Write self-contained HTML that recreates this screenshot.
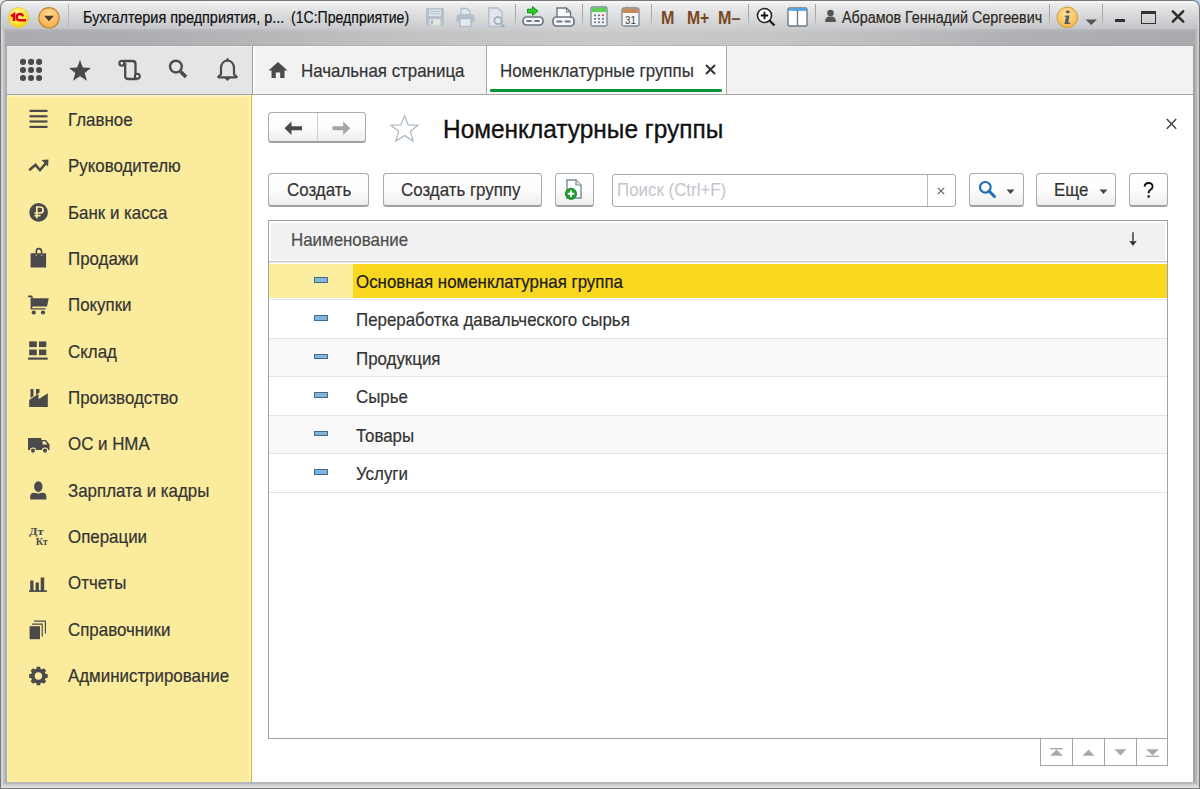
<!DOCTYPE html>
<html><head><meta charset="utf-8"><style>
html,body{margin:0;padding:0;width:1200px;height:789px;overflow:hidden;background:#7a7a7a;}
.r{position:absolute;display:block;}
.t{position:absolute;white-space:nowrap;}
svg.r{overflow:visible;}
</style></head><body>
<div class="r" style="left:0px;top:0px;width:1200px;height:789px;background:#7a7a7a;"></div>
<div class="r" style="left:0px;top:0px;width:8px;height:8px;background:#dfe6ee;"></div>
<div class="r" style="left:1192px;top:0px;width:8px;height:8px;background:#bcd6f2;"></div>
<div class="r" style="left:0px;top:0px;width:1200px;height:789px;background:#787878;border-radius:7px 7px 0 0;"></div>
<div class="r" style="left:1px;top:1px;width:1198px;height:787px;background:#d9dadc;border-radius:6px 6px 0 0;"></div>
<div class="r" style="left:2px;top:1px;width:1196px;height:28px;background:linear-gradient(#fafafa 0px,#ebebec 3px,#d7d8da 14px,#c3c4c7 28px);border-radius:6px 6px 0 0;"></div>
<div class="r" style="left:2px;top:1px;width:1196px;height:28px;background:linear-gradient(to right,rgba(255,255,255,0) 0px,rgba(255,255,255,0.18) 600px,rgba(255,255,255,0) 1196px);border-radius:6px 6px 0 0;"></div>
<div class="r" style="left:2px;top:29px;width:1196px;height:17px;background:linear-gradient(rgba(255,255,255,0.12),rgba(255,255,255,0) 4px),linear-gradient(to right,#a9abae 0px,#abadb0 120px,#b6b7b9 260px,#c3c3c4 420px,#c9c9c9 600px,#c6c6c7 760px,#bbbcbe 900px,#afb0b3 1020px,#a8aaae 1200px);"></div>
<div class="r" style="left:5px;top:45px;width:1190px;height:1px;background:linear-gradient(to right,#9fa1a5,#b8b8b8 50%,#9fa1a5);"></div>
<div class="r" style="left:1px;top:29px;width:2px;height:759px;background:#d3d4d6;"></div>
<div class="r" style="left:3px;top:29px;width:2px;height:759px;background:#c0c0c1;"></div>
<div class="r" style="left:5px;top:46px;width:2px;height:742px;background:#a9adb8;"></div>
<div class="r" style="left:1196.5px;top:29px;width:2px;height:759px;background:#cbcbcb;"></div>
<div class="r" style="left:1194.5px;top:29px;width:2px;height:759px;background:#b5b5b5;"></div>
<div class="r" style="left:1193px;top:46px;width:1.5px;height:742px;background:#a2a2a4;"></div>
<div class="r" style="left:5px;top:782px;width:1190px;height:2px;background:#b6b8bd;"></div>
<div class="r" style="left:3px;top:784px;width:1194px;height:2px;background:#cecece;"></div>
<div class="r" style="left:1px;top:786px;width:1198px;height:2px;background:#dedede;"></div>
<svg class="r" style="left:8px;top:7px;" width="21" height="21" viewBox="0 0 21 21"><defs><radialGradient id="g1" cx="0.45" cy="0.35" r="0.7"><stop offset="0" stop-color="#fff9a8"/><stop offset="0.6" stop-color="#ffe93a"/><stop offset="1" stop-color="#f4c400"/></radialGradient></defs>
<circle cx="10.5" cy="10.5" r="10" fill="url(#g1)" stroke="#e8c23a" stroke-width="0.8"/>
<path d="M3 9.2 L6 7.4 L6 14" stroke="#e60012" stroke-width="2.6" fill="none"/>
<path d="M15 9.4 A3.2 3.2 0 1 0 11.6 13.3 L18 13.3" stroke="#e60012" stroke-width="2.4" fill="none"/></svg>
<svg class="r" style="left:38px;top:7px;" width="22" height="22" viewBox="0 0 22 22"><defs><radialGradient id="g2" cx="0.5" cy="0.35" r="0.7"><stop offset="0" stop-color="#ffd99a"/><stop offset="1" stop-color="#f6a940"/></radialGradient></defs>
<circle cx="11" cy="10.8" r="10.2" fill="url(#g2)" stroke="#bf8a2a" stroke-width="1.1"/>
<path d="M6 8.8 L16 8.8 L11 14.3 Z" fill="#4a3a22"/></svg>
<div class="r" style="left:68px;top:4px;width:1px;height:24px;background:#b8b9bb;"></div>
<div class="t" style="left:82.50px;top:7.56px;font-size:16px;line-height:20px;color:#101010;font-weight:normal;font-family:'Liberation Sans',sans-serif;transform:scaleX(0.9);transform-origin:0 0;-webkit-text-stroke:0.2px #101010;">Бухгалтерия предприятия, р...</div>
<div class="t" style="left:291.30px;top:7.56px;font-size:16px;line-height:20px;color:#101010;font-weight:normal;font-family:'Liberation Sans',sans-serif;transform:scaleX(0.88);transform-origin:0 0;-webkit-text-stroke:0.2px #101010;">(1С:Предприятие)</div>
<svg class="r" style="left:425px;top:7px;" width="20" height="20" viewBox="0 0 20 20"><rect x="1" y="1" width="18" height="18" rx="1" fill="#b4c0cc" />
<rect x="4" y="2.5" width="12" height="6.5" fill="#dde3ea"/><rect x="5" y="4" width="10" height="1" fill="#b4c0cc"/><rect x="5" y="6.2" width="10" height="1" fill="#b4c0cc"/>
<rect x="4.5" y="12" width="11" height="6.5" fill="#dfe6dc"/><rect x="6" y="13" width="2" height="4.5" fill="#a8b4c0"/></svg>
<svg class="r" style="left:455px;top:7px;" width="21" height="21" viewBox="0 0 21 21"><path d="M6 1.5 H12 L15 4.5 V8 H6 Z" fill="#e4e8ec" stroke="#b0bcc8" stroke-width="1.3"/>
<rect x="1.5" y="7.5" width="18" height="8" rx="2" fill="#b4c0cc"/><rect x="5" y="11.5" width="11" height="8" fill="#e6eaee" stroke="#b0bcc8" stroke-width="1.3"/></svg>
<svg class="r" style="left:487px;top:7px;" width="21" height="21" viewBox="0 0 21 21"><path d="M1.8 1 H11 L15 5 V19.5 H1.8 Z" fill="#e2e6ea" stroke="#b0bcc8" stroke-width="1.3"/>
<circle cx="11" cy="13.5" r="3.6" fill="#e4e8ec" stroke="#a9b2ba" stroke-width="2"/><path d="M13.5 16 L17.5 20" stroke="#a9b2ba" stroke-width="2.2"/></svg>
<div class="r" style="left:515px;top:4px;width:1.2px;height:22px;background:linear-gradient(#a0a1a3,#a8a9ab 60%,rgba(180,181,183,0.3));"></div>
<svg class="r" style="left:522px;top:6px;" width="22" height="20" viewBox="0 0 22 20"><path d="M5.5 3.2 H10.5 V0.6 L16 5 L10.5 9.4 V6.8 H5.5 Z" fill="#22d022" stroke="#138a13" stroke-width="0.9" stroke-linejoin="round"/>
<rect x="1" y="11" width="20" height="8" rx="3.5" fill="#f6f7f8" stroke="#6a7684" stroke-width="1.7"/>
<path d="M4.5 15 H9.6 M12.4 15 H17.5" stroke="#6a7684" stroke-width="1.8"/><path d="M9.6 15 H12.4" stroke="#c8ced4" stroke-width="1.2"/></svg>
<svg class="r" style="left:552px;top:7px;" width="23" height="21" viewBox="0 0 23 21"><path d="M5 1 H14.5 L18.5 5 V11 H5 Z" fill="#fafbfc" stroke="#6a7684" stroke-width="1.4"/><path d="M14.5 1 V5 H18.5" fill="none" stroke="#6a7684" stroke-width="1.1"/>
<rect x="1" y="10" width="21" height="9" rx="3.5" fill="#f6f7f8" stroke="#6a7684" stroke-width="1.7"/>
<path d="M4.5 14.5 H10 M13 14.5 H18.5" stroke="#6a7684" stroke-width="1.8"/><path d="M10 14.5 H13" stroke="#c8ced4" stroke-width="1.2"/></svg>
<div class="r" style="left:582px;top:4px;width:1.2px;height:22px;background:linear-gradient(#a0a1a3,#a8a9ab 60%,rgba(180,181,183,0.3));"></div>
<svg class="r" style="left:590px;top:6px;" width="18" height="21" viewBox="0 0 18 21"><rect x="1" y="1" width="16" height="19" rx="1.5" fill="#eef2f6" stroke="#7c8893" stroke-width="1.3"/>
<rect x="1.6" y="1.6" width="14.8" height="4.5" fill="#5fcf55"/>
<g fill="#6a7580"><rect x="4" y="8.5" width="2" height="1.6"/><rect x="8" y="8.5" width="2" height="1.6"/><rect x="4" y="12" width="2" height="1.6"/><rect x="8" y="12" width="2" height="1.6"/><rect x="12" y="12" width="2" height="1.6"/><rect x="4" y="15.5" width="2" height="1.6"/><rect x="8" y="15.5" width="2" height="1.6"/><rect x="12" y="15.5" width="2" height="1.6"/></g><rect x="12" y="8.5" width="2" height="1.6" fill="#e33"/></svg>
<svg class="r" style="left:621px;top:6px;" width="19" height="21" viewBox="0 0 19 21"><rect x="1" y="2" width="17" height="18" rx="2" fill="#f4f6f8" stroke="#7c8893" stroke-width="1.3"/>
<path d="M1.6 3 Q1.6 2.6 3 2.6 H16 Q17.4 2.6 17.4 4 V7 H1.6 Z" fill="#c98a55"/>
<rect x="5" y="0.5" width="1.5" height="3" fill="#9a9a9a"/><rect x="12.5" y="0.5" width="1.5" height="3" fill="#9a9a9a"/>
<text x="9.5" y="18" font-family="Liberation Sans" font-size="11.5" text-anchor="middle" fill="#444" textLength="11" lengthAdjust="spacingAndGlyphs">31</text></svg>
<div class="r" style="left:651px;top:4px;width:1.2px;height:22px;background:linear-gradient(#a0a1a3,#a8a9ab 60%,rgba(180,181,183,0.3));"></div>
<div class="t" style="left:660.50px;top:6.84px;font-size:17.5px;line-height:22px;color:#7a4820;font-weight:bold;font-family:'Liberation Sans',sans-serif;transform:scaleX(0.92);transform-origin:0 0;">M</div>
<div class="t" style="left:687.00px;top:6.84px;font-size:17.5px;line-height:22px;color:#7a4820;font-weight:bold;font-family:'Liberation Sans',sans-serif;transform:scaleX(0.9);transform-origin:0 0;">M+</div>
<div class="t" style="left:717.50px;top:6.84px;font-size:17.5px;line-height:22px;color:#7a4820;font-weight:bold;font-family:'Liberation Sans',sans-serif;transform:scaleX(0.92);transform-origin:0 0;">M&#8211;</div>
<div class="r" style="left:748px;top:4px;width:1.2px;height:22px;background:linear-gradient(#a0a1a3,#a8a9ab 60%,rgba(180,181,183,0.3));"></div>
<svg class="r" style="left:756px;top:7px;" width="21" height="20" viewBox="0 0 21 20"><circle cx="8.5" cy="8.5" r="7" fill="#fff" stroke="#222" stroke-width="1.6"/>
<path d="M8.5 4.8 V12.2 M4.8 8.5 H12.2" stroke="#111" stroke-width="1.8"/><path d="M13.5 13.5 L18.5 18.5" stroke="#222" stroke-width="2.4"/></svg>
<svg class="r" style="left:787px;top:7px;" width="21" height="20" viewBox="0 0 21 20"><rect x="1" y="1" width="19" height="18" rx="1.5" fill="#fff" stroke="#6d7a88" stroke-width="1.4"/>
<rect x="1.6" y="1.6" width="17.8" height="2.2" fill="#47a5ee"/><rect x="9.8" y="3" width="1.4" height="16" fill="#6d7a88"/></svg>
<div class="r" style="left:815px;top:4px;width:1.2px;height:22px;background:linear-gradient(#a0a1a3,#a8a9ab 60%,rgba(180,181,183,0.3));"></div>
<svg class="r" style="left:824px;top:9px;" width="13" height="14" viewBox="0 0 13 14"><circle cx="6.5" cy="4" r="3.3" fill="#555"/><path d="M1 13 Q1 8 5 7.5 H8 Q12 8 12 13 Z" fill="#555"/></svg>
<div class="t" style="left:842.00px;top:7.56px;font-size:16px;line-height:20px;color:#2e2a22;font-weight:normal;font-family:'Liberation Sans',sans-serif;transform:scaleX(0.895);transform-origin:0 0;-webkit-text-stroke:0.2px #2e2a22;">Абрамов Геннадий Сергеевич</div>
<div class="r" style="left:1049px;top:4px;width:1.2px;height:22px;background:linear-gradient(#a0a1a3,#a8a9ab 60%,rgba(180,181,183,0.3));"></div>
<svg class="r" style="left:1056px;top:6px;" width="23" height="23" viewBox="0 0 23 23"><defs><radialGradient id="g3" cx="0.45" cy="0.35" r="0.75"><stop offset="0" stop-color="#ffe2a0"/><stop offset="1" stop-color="#f4b23e"/></radialGradient></defs>
<circle cx="11.3" cy="11.3" r="10.3" fill="url(#g3)" stroke="#d09a30" stroke-width="1"/>
<ellipse cx="11.8" cy="6" rx="2" ry="1.4" fill="#5a5e64"/><path d="M8.8 9.4 H13.6 L12.2 16.4 H14.2 V18 H8.4 L10 11 H8.8 Z" fill="#5a5e64"/></svg>
<svg class="r" style="left:1085px;top:19px;" width="13" height="7" viewBox="0 0 13 7"><path d="M0.5 0.5 H12 L6.25 6 Z" fill="#555"/></svg>
<div class="r" style="left:1102px;top:4px;width:1.2px;height:22px;background:linear-gradient(#a0a1a3,#a8a9ab 60%,rgba(180,181,183,0.3));"></div>
<div class="r" style="left:1115px;top:19.3px;width:10px;height:3.2px;background:#333;"></div>
<div class="r" style="left:1141px;top:11px;width:15px;height:13px;border:1.6px solid #333;border-top-width:3px;box-sizing:border-box;"></div>
<svg class="r" style="left:1171px;top:10px;" width="14" height="13" viewBox="0 0 14 13"><path d="M1.8 1.3 L12.2 11.7 M12.2 1.3 L1.8 11.7" stroke="#2e2e2e" stroke-width="2.5" stroke-linecap="round"/></svg>
<div class="r" style="left:7px;top:46px;width:245px;height:48px;background:#e5e5e5;"></div>
<div class="r" style="left:7px;top:46px;width:245px;height:1px;background:#eeeeee;"></div>
<div class="r" style="left:7px;top:94px;width:245px;height:1px;background:#a3a5b0;"></div>
<div class="r" style="left:252px;top:46px;width:1px;height:49px;background:#a0a0a0;"></div>
<div class="r" style="left:253px;top:46px;width:940px;height:48px;background:#f2f2f2;"></div>
<div class="r" style="left:253px;top:46px;width:940px;height:1px;background:#f7f7f7;"></div>
<div class="r" style="left:253px;top:46px;width:2px;height:48px;background:#fbfbfb;"></div>
<div class="r" style="left:253px;top:94px;width:940px;height:1px;background:#a6a6a6;"></div>
<svg class="r" style="left:19px;top:57.5px;" width="25" height="25" viewBox="0 0 25 25"><circle cx="4.00" cy="3.90" r="3.05" fill="#4a4a4a"/><circle cx="12.05" cy="3.90" r="3.05" fill="#4a4a4a"/><circle cx="20.10" cy="3.90" r="3.05" fill="#4a4a4a"/><circle cx="4.00" cy="11.95" r="3.05" fill="#4a4a4a"/><circle cx="12.05" cy="11.95" r="3.05" fill="#4a4a4a"/><circle cx="20.10" cy="11.95" r="3.05" fill="#4a4a4a"/><circle cx="4.00" cy="20.00" r="3.05" fill="#4a4a4a"/><circle cx="12.05" cy="20.00" r="3.05" fill="#4a4a4a"/><circle cx="20.10" cy="20.00" r="3.05" fill="#4a4a4a"/></svg>
<svg class="r" style="left:68px;top:59px;" width="24" height="23" viewBox="0 0 24 23"><path d="M12 1 L14.9 8.6 L23 8.9 L16.7 13.9 L18.9 21.8 L12 17.3 L5.1 21.8 L7.3 13.9 L1 8.9 L9.1 8.6 Z" fill="#4a4a4a"/></svg>
<svg class="r" style="left:110px;top:52px;" width="32" height="32" viewBox="0 0 32 32"><path d="M13.5 9 H22.5 Q25.5 9 25.5 12 V24" fill="none" stroke="#4a4a4a" stroke-width="2.3"/><path d="M15.2 11 V24 Q15.2 27 18.2 27 H27" fill="none" stroke="#4a4a4a" stroke-width="2.3"/>
<circle cx="11.8" cy="11.2" r="2.4" fill="#fff" stroke="#4a4a4a" stroke-width="2.2"/><circle cx="27.3" cy="24.2" r="2.4" fill="#fff" stroke="#4a4a4a" stroke-width="2.2"/></svg>
<svg class="r" style="left:160px;top:52px;" width="32" height="32" viewBox="0 0 32 32"><circle cx="15.9" cy="14.6" r="5.9" fill="none" stroke="#4a4a4a" stroke-width="2.4"/><path d="M20.5 19.5 L26 25" stroke="#4a4a4a" stroke-width="3.8"/></svg>
<svg class="r" style="left:210px;top:52px;" width="32" height="32" viewBox="0 0 32 32"><path d="M17.5 8.5 Q11.5 9 11 16 V22.5 L8.8 24.2 Q7.8 25.2 9 25.4 H26 Q27.2 25.2 26.2 24.2 L24 22.5 V16 Q23.5 9 17.5 8.5 Z" fill="none" stroke="#4a4a4a" stroke-width="2.2" stroke-linejoin="round"/><path d="M15.5 7.8 L17.5 5.8 L19.5 7.8 Z M14.5 26 L17.5 29 L20.5 26 Z" fill="#4a4a4a"/></svg>
<svg class="r" style="left:268px;top:61px;" width="20" height="18" viewBox="0 0 20 18"><path d="M10 1 L19.5 9.5 H16.5 V17 H12.2 V11.5 H7.8 V17 H3.5 V9.5 H0.5 Z" fill="#4a4a4a"/></svg>
<div class="t" style="left:301.00px;top:59.53px;font-size:17.8px;line-height:22px;color:#333;font-weight:normal;font-family:'Liberation Sans',sans-serif;transform:scaleX(0.95);transform-origin:0 0;-webkit-text-stroke:0.2px #333;">Начальная страница</div>
<div class="r" style="left:486px;top:46px;width:1px;height:48px;background:#a8a8a8;"></div>
<div class="r" style="left:487px;top:46px;width:239px;height:48px;background:#fff;"></div>
<div class="r" style="left:726px;top:46px;width:1px;height:48px;background:#a8a8a8;"></div>
<div class="r" style="left:490px;top:89px;width:232px;height:2.5px;background:#0c9433;border-radius:1px;"></div>
<div class="t" style="left:500.00px;top:59.53px;font-size:17.8px;line-height:22px;color:#333;font-weight:normal;font-family:'Liberation Sans',sans-serif;transform:scaleX(0.95);transform-origin:0 0;-webkit-text-stroke:0.2px #333;">Номенклатурные группы</div>
<svg class="r" style="left:705px;top:64px;" width="11" height="11" viewBox="0 0 11 11"><path d="M1 1 L10 10 M10 1 L1 10" stroke="#333" stroke-width="2"/></svg>
<div class="r" style="left:7px;top:95px;width:244px;height:687px;background:#fbeb9d;"></div>
<div class="r" style="left:7px;top:95px;width:244px;height:1.5px;background:#fdf3b8;"></div>
<div class="r" style="left:7px;top:95px;width:1.3px;height:687px;background:#fdf1a6;"></div>
<div class="r" style="left:249px;top:95px;width:1.5px;height:687px;background:#fdf1ab;"></div>
<div class="r" style="left:250.5px;top:95px;width:1.5px;height:687px;background:#cfb940;"></div>
<div class="r" style="left:252px;top:95px;width:941px;height:687px;background:#fff;"></div>
<svg class="r" style="left:28px;top:109.2px;" width="22" height="21" viewBox="0 0 22 21"><g fill="#4a4a4a"><rect x="1.5" y="0.8" width="18" height="2.2"/><rect x="1.5" y="6.2" width="18" height="2.2"/><rect x="1.5" y="11.4" width="18" height="2.2"/><rect x="1.5" y="16.8" width="18" height="2.2"/></g></svg>
<div class="t" style="left:68.00px;top:108.83px;font-size:17.8px;line-height:22px;color:#333;font-weight:normal;font-family:'Liberation Sans',sans-serif;transform:scaleX(0.95);transform-origin:0 0;-webkit-text-stroke:0.2px #333;">Главное</div>
<svg class="r" style="left:28px;top:156px;" width="22" height="21" viewBox="0 0 22 21"><path d="M1.2 14.3 L7.5 8.8 L12 14 L18.5 6.5" fill="none" stroke="#4a4a4a" stroke-width="2.6" stroke-linejoin="miter"/><path d="M13.5 4 L20.5 3.5 L20 10.5 Z" fill="#4a4a4a"/></svg>
<div class="t" style="left:68.00px;top:155.19px;font-size:17.8px;line-height:22px;color:#333;font-weight:normal;font-family:'Liberation Sans',sans-serif;transform:scaleX(0.95);transform-origin:0 0;-webkit-text-stroke:0.2px #333;">Руководителю</div>
<svg class="r" style="left:28px;top:203px;" width="22" height="21" viewBox="0 0 22 21"><circle cx="10.6" cy="9.4" r="9.3" fill="#4a4a4a"/><path d="M8.8 15.3 V4 H12 Q15.2 4 15.2 7 Q15.2 10 12 10 H6.5 M6.5 12.6 H12.5" fill="none" stroke="#fbeb9d" stroke-width="1.7"/></svg>
<div class="t" style="left:68.00px;top:201.55px;font-size:17.8px;line-height:22px;color:#333;font-weight:normal;font-family:'Liberation Sans',sans-serif;transform:scaleX(0.95);transform-origin:0 0;-webkit-text-stroke:0.2px #333;">Банк и касса</div>
<svg class="r" style="left:28px;top:248px;" width="22" height="21" viewBox="0 0 22 21"><path d="M2.6 5.2 H7.5 V7.5 H9.2 V5.2 H12.8 V7.5 H14.5 V5.2 H18.1 V19.5 H2.6 Z" fill="#4a4a4a"/><path d="M8.3 7 V3.8 Q8.3 0.7 10.8 0.7 Q13.6 0.7 13.6 3.8 V7" fill="none" stroke="#4a4a4a" stroke-width="1.7"/></svg>
<div class="t" style="left:68.00px;top:247.91px;font-size:17.8px;line-height:22px;color:#333;font-weight:normal;font-family:'Liberation Sans',sans-serif;transform:scaleX(0.95);transform-origin:0 0;-webkit-text-stroke:0.2px #333;">Продажи</div>
<svg class="r" style="left:28px;top:295px;" width="22" height="21" viewBox="0 0 22 21"><path d="M0 1.3 H3.5 L4.3 3.5" fill="none" stroke="#4a4a4a" stroke-width="1.8"/><path d="M2.6 3.3 H20.8 L19 11.5 H4.3 V13.2 H17.5 V14.6 H2.6 Z" fill="#4a4a4a"/><circle cx="5.8" cy="17.5" r="2.1" fill="#4a4a4a"/><circle cx="15" cy="17.5" r="2.1" fill="#4a4a4a"/></svg>
<div class="t" style="left:68.00px;top:294.27px;font-size:17.8px;line-height:22px;color:#333;font-weight:normal;font-family:'Liberation Sans',sans-serif;transform:scaleX(0.95);transform-origin:0 0;-webkit-text-stroke:0.2px #333;">Покупки</div>
<svg class="r" style="left:28px;top:341px;" width="22" height="21" viewBox="0 0 22 21"><g fill="#4a4a4a"><rect x="1.2" y="0.4" width="7.6" height="5.7"/><rect x="11" y="0.4" width="7.3" height="5.7"/><rect x="1.2" y="8.5" width="7.6" height="5.7"/><rect x="11" y="8.5" width="7.3" height="5.7"/><rect x="0" y="16.5" width="19.7" height="2.2"/></g></svg>
<div class="t" style="left:68.00px;top:340.63px;font-size:17.8px;line-height:22px;color:#333;font-weight:normal;font-family:'Liberation Sans',sans-serif;transform:scaleX(0.95);transform-origin:0 0;-webkit-text-stroke:0.2px #333;">Склад</div>
<svg class="r" style="left:28px;top:388px;" width="22" height="21" viewBox="0 0 22 21"><path d="M1.2 12 L10.5 5.8 V11.2 L19.8 5.2 V19 H1.2 Z M2.5 0.9 H5.5 V8 L2.5 10 Z M8 0.9 H11.5 V4.5 L8 6.8 Z" fill="#4a4a4a"/></svg>
<div class="t" style="left:68.00px;top:386.99px;font-size:17.8px;line-height:22px;color:#333;font-weight:normal;font-family:'Liberation Sans',sans-serif;transform:scaleX(0.95);transform-origin:0 0;-webkit-text-stroke:0.2px #333;">Производство</div>
<svg class="r" style="left:27.5px;top:438px;" width="22" height="21" viewBox="0 0 22 21"><path d="M0 0 H13.3 V2 H18 L21.5 6.5 V12 H0 Z" fill="#4a4a4a"/><path d="M14.6 3.3 H17.2 L19.3 6.5 H14.6 Z" fill="#fbeb9d"/><circle cx="5" cy="12.6" r="2.6" fill="#4a4a4a" stroke="#fbeb9d" stroke-width="1.1"/><circle cx="17" cy="12.6" r="2.6" fill="#4a4a4a" stroke="#fbeb9d" stroke-width="1.1"/></svg>
<div class="t" style="left:68.00px;top:433.35px;font-size:17.8px;line-height:22px;color:#333;font-weight:normal;font-family:'Liberation Sans',sans-serif;transform:scaleX(0.95);transform-origin:0 0;-webkit-text-stroke:0.2px #333;">ОС и НМА</div>
<svg class="r" style="left:29px;top:481px;" width="22" height="21" viewBox="0 0 22 21"><ellipse cx="9.3" cy="5.6" rx="4.2" ry="5.3" fill="#4a4a4a"/><path d="M1.2 18.4 V15.5 Q1.2 12 5 11.7 H13.5 Q17.4 12 17.4 15.5 V18.4 Z" fill="#4a4a4a"/><path d="M6 11.2 Q9.3 13.4 12.6 11.2" fill="none" stroke="#fbeb9d" stroke-width="1"/></svg>
<div class="t" style="left:68.00px;top:479.71px;font-size:17.8px;line-height:22px;color:#333;font-weight:normal;font-family:'Liberation Sans',sans-serif;transform:scaleX(0.95);transform-origin:0 0;-webkit-text-stroke:0.2px #333;">Зарплата и кадры</div>
<svg class="r" style="left:28px;top:527px;" width="22" height="21" viewBox="0 0 22 21"><text x="1" y="8.4" font-family="Liberation Serif" font-weight="bold" font-size="10.8" textLength="14.6" lengthAdjust="spacingAndGlyphs" fill="#4a4a4a">Дт</text><text x="7.7" y="18.3" font-family="Liberation Serif" font-weight="bold" font-size="10.8" textLength="12.2" lengthAdjust="spacingAndGlyphs" fill="#4a4a4a">Кт</text></svg>
<div class="t" style="left:68.00px;top:526.07px;font-size:17.8px;line-height:22px;color:#333;font-weight:normal;font-family:'Liberation Sans',sans-serif;transform:scaleX(0.95);transform-origin:0 0;-webkit-text-stroke:0.2px #333;">Операции</div>
<svg class="r" style="left:28px;top:577px;" width="22" height="21" viewBox="0 0 22 21"><g fill="#4a4a4a"><rect x="2.2" y="3.5" width="3.3" height="11"/><rect x="7.6" y="5.5" width="3.3" height="9"/><rect x="12.7" y="0.5" width="3.5" height="14"/><rect x="1" y="13.3" width="18" height="1.6"/></g></svg>
<div class="t" style="left:68.00px;top:572.43px;font-size:17.8px;line-height:22px;color:#333;font-weight:normal;font-family:'Liberation Sans',sans-serif;transform:scaleX(0.95);transform-origin:0 0;-webkit-text-stroke:0.2px #333;">Отчеты</div>
<svg class="r" style="left:28px;top:620px;" width="22" height="21" viewBox="0 0 22 21"><g fill="#4a4a4a"><rect x="1.6" y="6.2" width="10.4" height="13"/><path d="M4 3.5 H14.8 V16.5 H13.6 V4.7 H4 Z"/><path d="M6 0.5 H18 V13.5 H16.8 V1.7 H6 Z"/></g></svg>
<div class="t" style="left:68.00px;top:618.79px;font-size:17.8px;line-height:22px;color:#333;font-weight:normal;font-family:'Liberation Sans',sans-serif;transform:scaleX(0.95);transform-origin:0 0;-webkit-text-stroke:0.2px #333;">Справочники</div>
<svg class="r" style="left:28px;top:666px;" width="22" height="21" viewBox="0 0 22 21"><polygon points="17.37,7.84 19.73,8.21 19.73,11.79 17.37,12.16 16.86,13.41 18.27,15.33 15.73,17.87 13.81,16.46 12.56,16.97 12.19,19.33 8.61,19.33 8.24,16.97 6.99,16.46 5.07,17.87 2.53,15.33 3.94,13.41 3.43,12.16 1.07,11.79 1.07,8.21 3.43,7.84 3.94,6.59 2.53,4.67 5.07,2.13 6.99,3.54 8.24,3.03 8.61,0.67 12.19,0.67 12.56,3.03 13.81,3.54 15.73,2.13 18.27,4.67 16.86,6.59" fill="#4a4a4a"/><circle cx="10.4" cy="10" r="7.1" fill="#4a4a4a"/><circle cx="10.4" cy="10" r="3.7" fill="#fbeb9d"/></svg>
<div class="t" style="left:68.00px;top:665.15px;font-size:17.8px;line-height:22px;color:#333;font-weight:normal;font-family:'Liberation Sans',sans-serif;transform:scaleX(0.95);transform-origin:0 0;-webkit-text-stroke:0.2px #333;">Администрирование</div>
<div class="r" style="left:268px;top:112px;width:98px;height:31px;box-sizing:border-box;border:1.4px solid #aaaaaa;border-bottom:2.6px solid #a0a0a0;border-radius:3.5px;background:linear-gradient(#ffffff 0%,#fdfdfd 50%,#ededed 100%);"></div>
<div class="r" style="left:317px;top:113px;width:1px;height:28px;background:#d0d0d0;"></div>
<svg class="r" style="left:284px;top:121px;" width="19" height="15" viewBox="0 0 19 15"><path d="M0.5 7.2 L7.5 0.5 V5.3 H18 V9.2 H7.5 V14 Z" fill="#4a4a4a"/></svg>
<svg class="r" style="left:331px;top:121px;" width="20" height="15" viewBox="0 0 20 15"><path d="M19.2 7.2 L12.2 0.5 V5.3 H1.5 V9.2 H12.2 V14 Z" fill="#a4a4a4"/></svg>
<svg class="r" style="left:388px;top:113px;" width="33" height="30" viewBox="0 0 33 30"><path d="M16.5 2.8 L20.2 11.9 L30 12.2 L22.4 18.3 L25.1 28 L16.5 22.6 L7.9 28 L10.6 18.3 L3 12.2 L12.8 11.9 Z" fill="#fff" stroke="#aeb8c2" stroke-width="1.25" stroke-linejoin="miter"/></svg>
<div class="t" style="left:443.00px;top:113.10px;font-size:25.4px;line-height:32px;color:#111;font-weight:normal;font-family:'Liberation Sans',sans-serif;transform:scaleX(0.962);transform-origin:0 0;-webkit-text-stroke:0.35px #111;">Номенклатурные группы</div>
<svg class="r" style="left:1166px;top:118px;" width="11" height="12" viewBox="0 0 11 12"><path d="M0.8 1 L10.2 10.8 M10.2 1 L0.8 10.8" stroke="#444" stroke-width="1.5"/></svg>
<div class="r" style="left:268px;top:172.5px;width:101px;height:34.5px;box-sizing:border-box;border:1.4px solid #aaaaaa;border-bottom:2.6px solid #a0a0a0;border-radius:3.5px;background:linear-gradient(#ffffff 0%,#fdfdfd 50%,#ededed 100%);"></div>
<div class="t" style="left:287.00px;top:179.43px;font-size:17.8px;line-height:22px;color:#333;font-weight:normal;font-family:'Liberation Sans',sans-serif;transform:scaleX(0.95);transform-origin:0 0;-webkit-text-stroke:0.2px #333;">Создать</div>
<div class="r" style="left:382.5px;top:172.5px;width:159px;height:34.5px;box-sizing:border-box;border:1.4px solid #aaaaaa;border-bottom:2.6px solid #a0a0a0;border-radius:3.5px;background:linear-gradient(#ffffff 0%,#fdfdfd 50%,#ededed 100%);"></div>
<div class="t" style="left:400.50px;top:179.43px;font-size:17.8px;line-height:22px;color:#333;font-weight:normal;font-family:'Liberation Sans',sans-serif;transform:scaleX(0.95);transform-origin:0 0;-webkit-text-stroke:0.2px #333;">Создать группу</div>
<div class="r" style="left:554.5px;top:172.5px;width:39px;height:34.5px;box-sizing:border-box;border:1.4px solid #aaaaaa;border-bottom:2.6px solid #a0a0a0;border-radius:3.5px;background:linear-gradient(#ffffff 0%,#fdfdfd 50%,#ededed 100%);"></div>
<svg class="r" style="left:564px;top:179px;" width="20" height="21" viewBox="0 0 20 21"><path d="M3 1 H12 L17 6 V19 H3 Z" fill="#fff" stroke="#7a8896" stroke-width="1.4"/><path d="M12 1 V6 H17" fill="#dfe6ee" stroke="#7a8896" stroke-width="1.2"/>
<circle cx="7" cy="14.8" r="5.6" fill="#1aa12b" stroke="#0e7c1d" stroke-width="0.8"/><path d="M7 11.6 V18 M3.8 14.8 H10.2" stroke="#fff" stroke-width="2"/></svg>
<div class="r" style="left:611.5px;top:174px;width:344px;height:32.5px;box-sizing:border-box;border:1.3px solid #a9a9a9;border-radius:3px;background:#fff;"></div>
<div class="r" style="left:927px;top:175px;width:1.2px;height:30.5px;background:#b8b8b8;"></div>
<div class="t" style="left:617.00px;top:179.13px;font-size:17.8px;line-height:22px;color:#c4c4cc;font-weight:normal;font-family:'Liberation Sans',sans-serif;transform:scaleX(0.95);transform-origin:0 0;-webkit-text-stroke:0;">Поиск (Ctrl+F)</div>
<svg class="r" style="left:937px;top:187px;" width="8" height="8" viewBox="0 0 8 8"><path d="M0.8 0.8 L7.2 7.2 M7.2 0.8 L0.8 7.2" stroke="#666" stroke-width="1.2"/></svg>
<div class="r" style="left:968.5px;top:172.5px;width:55px;height:34.5px;box-sizing:border-box;border:1.4px solid #aaaaaa;border-bottom:2.6px solid #a0a0a0;border-radius:3.5px;background:linear-gradient(#ffffff 0%,#fdfdfd 50%,#ededed 100%);"></div>
<svg class="r" style="left:978px;top:180px;" width="19" height="19" viewBox="0 0 19 19"><circle cx="7.3" cy="7.3" r="5.3" fill="none" stroke="#1c70b8" stroke-width="2.2"/><path d="M11 11 L16.5 16.5" stroke="#1c70b8" stroke-width="3" stroke-linecap="round"/></svg>
<svg class="r" style="left:1006px;top:189px;" width="9" height="6" viewBox="0 0 9 6"><path d="M0.5 0.5 H8.5 L4.5 5 Z" fill="#444"/></svg>
<div class="r" style="left:1036px;top:172.5px;width:80px;height:34.5px;box-sizing:border-box;border:1.4px solid #aaaaaa;border-bottom:2.6px solid #a0a0a0;border-radius:3.5px;background:linear-gradient(#ffffff 0%,#fdfdfd 50%,#ededed 100%);"></div>
<div class="t" style="left:1053.50px;top:179.43px;font-size:17.8px;line-height:22px;color:#333;font-weight:normal;font-family:'Liberation Sans',sans-serif;transform:scaleX(0.95);transform-origin:0 0;-webkit-text-stroke:0.2px #333;">Еще</div>
<svg class="r" style="left:1099px;top:189px;" width="9" height="6" viewBox="0 0 9 6"><path d="M0.5 0.5 H8.5 L4.5 5 Z" fill="#444"/></svg>
<div class="r" style="left:1128.5px;top:172.5px;width:39px;height:34.5px;box-sizing:border-box;border:1.4px solid #aaaaaa;border-bottom:2.6px solid #a0a0a0;border-radius:3.5px;background:linear-gradient(#ffffff 0%,#fdfdfd 50%,#ededed 100%);"></div>
<svg class="r" style="left:1143px;top:182px;" width="12" height="16" viewBox="0 0 12 16"><path d="M1.6 4.6 Q1.8 1 5.6 1 Q9.6 1 9.6 4.4 Q9.6 6.4 7.4 7.8 Q5.6 9 5.6 11.3" fill="none" stroke="#111" stroke-width="1.9"/><rect x="4.5" y="13.3" width="2.3" height="2.3" fill="#111"/></svg>
<div class="r" style="left:268px;top:220px;width:900px;height:519px;box-sizing:border-box;border:1.3px solid #a2a2a2;background:#fff;"></div>
<div class="r" style="left:271px;top:223px;width:893.5px;height:36.6px;background:#f1f1f1;"></div>
<div class="r" style="left:269.3px;top:261px;width:897.4px;height:1px;background:#c9c9c9;"></div>
<div class="r" style="left:269.3px;top:262px;width:897.4px;height:1px;background:#e4e4ee;"></div>
<div class="t" style="left:290.50px;top:229.03px;font-size:17.8px;line-height:22px;color:#4d4d4d;font-weight:normal;font-family:'Liberation Sans',sans-serif;transform:scaleX(0.95);transform-origin:0 0;-webkit-text-stroke:0.2px #4d4d4d;">Наименование</div>
<svg class="r" style="left:1127px;top:231px;" width="12" height="17" viewBox="0 0 12 17"><path d="M6 1.2 V12" stroke="#333" stroke-width="1.4"/><path d="M2.8 10.3 L6 14.4 L9.2 10.3 Q6 11.6 2.8 10.3 Z" fill="#333" stroke="#333" stroke-width="0.7" stroke-linejoin="round"/></svg>
<div class="r" style="left:269.3px;top:263.5px;width:83.5px;height:34.9px;background:#fcee9f;"></div>
<div class="r" style="left:352.8px;top:263.5px;width:813.9px;height:34.9px;background:#fad81f;"></div>
<div class="r" style="left:269.3px;top:298.7px;width:897.4px;height:1.8px;background:#e6e7ef;"></div>
<div class="r" style="left:314px;top:277.0px;width:13.5px;height:5.5px;box-sizing:border-box;border:1.2px solid #3f6a8e;background:#86b3d8;border-radius:0.5px;"></div>
<div class="t" style="left:355.50px;top:270.93px;font-size:17.8px;line-height:22px;color:#1a1a1a;font-weight:normal;font-family:'Liberation Sans',sans-serif;transform:scaleX(0.95);transform-origin:0 0;-webkit-text-stroke:0.2px #1a1a1a;">Основная номенклатурная группа</div>
<div class="r" style="left:269.3px;top:300.62px;width:897.4px;height:38.42px;background:#ffffff;"></div>
<div class="r" style="left:269.3px;top:338.04px;width:897.4px;height:1.3px;background:#e3e3e3;"></div>
<div class="r" style="left:314px;top:315.42px;width:13.5px;height:5.5px;box-sizing:border-box;border:1.2px solid #3f6a8e;background:#86b3d8;border-radius:0.5px;"></div>
<div class="t" style="left:355.50px;top:309.35px;font-size:17.8px;line-height:22px;color:#333;font-weight:normal;font-family:'Liberation Sans',sans-serif;transform:scaleX(0.95);transform-origin:0 0;-webkit-text-stroke:0.2px #333;">Переработка давальческого сырья</div>
<div class="r" style="left:269.3px;top:339.03999999999996px;width:897.4px;height:38.42px;background:#f9f9f9;"></div>
<div class="r" style="left:269.3px;top:376.46px;width:897.4px;height:1.3px;background:#e3e3e3;"></div>
<div class="r" style="left:314px;top:353.84px;width:13.5px;height:5.5px;box-sizing:border-box;border:1.2px solid #3f6a8e;background:#86b3d8;border-radius:0.5px;"></div>
<div class="t" style="left:355.50px;top:347.77px;font-size:17.8px;line-height:22px;color:#333;font-weight:normal;font-family:'Liberation Sans',sans-serif;transform:scaleX(0.95);transform-origin:0 0;-webkit-text-stroke:0.2px #333;">Продукция</div>
<div class="r" style="left:269.3px;top:377.46px;width:897.4px;height:38.42px;background:#ffffff;"></div>
<div class="r" style="left:269.3px;top:414.88px;width:897.4px;height:1.3px;background:#e3e3e3;"></div>
<div class="r" style="left:314px;top:392.26px;width:13.5px;height:5.5px;box-sizing:border-box;border:1.2px solid #3f6a8e;background:#86b3d8;border-radius:0.5px;"></div>
<div class="t" style="left:355.50px;top:386.19px;font-size:17.8px;line-height:22px;color:#333;font-weight:normal;font-family:'Liberation Sans',sans-serif;transform:scaleX(0.95);transform-origin:0 0;-webkit-text-stroke:0.2px #333;">Сырье</div>
<div class="r" style="left:269.3px;top:415.88px;width:897.4px;height:38.42px;background:#f9f9f9;"></div>
<div class="r" style="left:269.3px;top:453.3px;width:897.4px;height:1.3px;background:#e3e3e3;"></div>
<div class="r" style="left:314px;top:430.68px;width:13.5px;height:5.5px;box-sizing:border-box;border:1.2px solid #3f6a8e;background:#86b3d8;border-radius:0.5px;"></div>
<div class="t" style="left:355.50px;top:424.61px;font-size:17.8px;line-height:22px;color:#333;font-weight:normal;font-family:'Liberation Sans',sans-serif;transform:scaleX(0.95);transform-origin:0 0;-webkit-text-stroke:0.2px #333;">Товары</div>
<div class="r" style="left:269.3px;top:454.3px;width:897.4px;height:38.42px;background:#ffffff;"></div>
<div class="r" style="left:269.3px;top:491.72px;width:897.4px;height:1.3px;background:#e3e3e3;"></div>
<div class="r" style="left:314px;top:469.1px;width:13.5px;height:5.5px;box-sizing:border-box;border:1.2px solid #3f6a8e;background:#86b3d8;border-radius:0.5px;"></div>
<div class="t" style="left:355.50px;top:463.03px;font-size:17.8px;line-height:22px;color:#333;font-weight:normal;font-family:'Liberation Sans',sans-serif;transform:scaleX(0.95);transform-origin:0 0;-webkit-text-stroke:0.2px #333;">Услуги</div>
<div class="r" style="left:1040px;top:737.5px;width:128px;height:28.2px;box-sizing:border-box;border:1.3px solid #a4a4a4;background:#fff;"></div>
<div class="r" style="left:1071.85px;top:737.5px;width:1.3px;height:28.2px;background:#a4a4a4;"></div>
<div class="r" style="left:1103.7px;top:737.5px;width:1.3px;height:28.2px;background:#a4a4a4;"></div>
<div class="r" style="left:1135.55px;top:737.5px;width:1.3px;height:28.2px;background:#a4a4a4;"></div>
<svg class="r" style="left:1049px;top:747px;" width="15" height="10" viewBox="0 0 15 10"><rect x="1.2" y="1" width="12.6" height="1.4" fill="#a9a9a9"/><path d="M1.2 8.8 L7.5 2.4 L13.8 8.8 Z" fill="#a9a9a9"/></svg>
<svg class="r" style="left:1081px;top:748px;" width="15" height="9" viewBox="0 0 15 9"><path d="M1.5 7.8 L7.5 1.5 L13.5 7.8 Z" fill="#a9a9a9"/></svg>
<svg class="r" style="left:1113px;top:748px;" width="15" height="9" viewBox="0 0 15 9"><path d="M1.5 1.2 L7.5 7.5 L13.5 1.2 Z" fill="#a9a9a9"/></svg>
<svg class="r" style="left:1145px;top:748px;" width="15" height="10" viewBox="0 0 15 10"><path d="M1.2 1.2 L7.5 7.5 L13.8 1.2 Z" fill="#a9a9a9"/><rect x="1.2" y="7.6" width="12.6" height="1.4" fill="#a9a9a9"/></svg>
</body></html>
